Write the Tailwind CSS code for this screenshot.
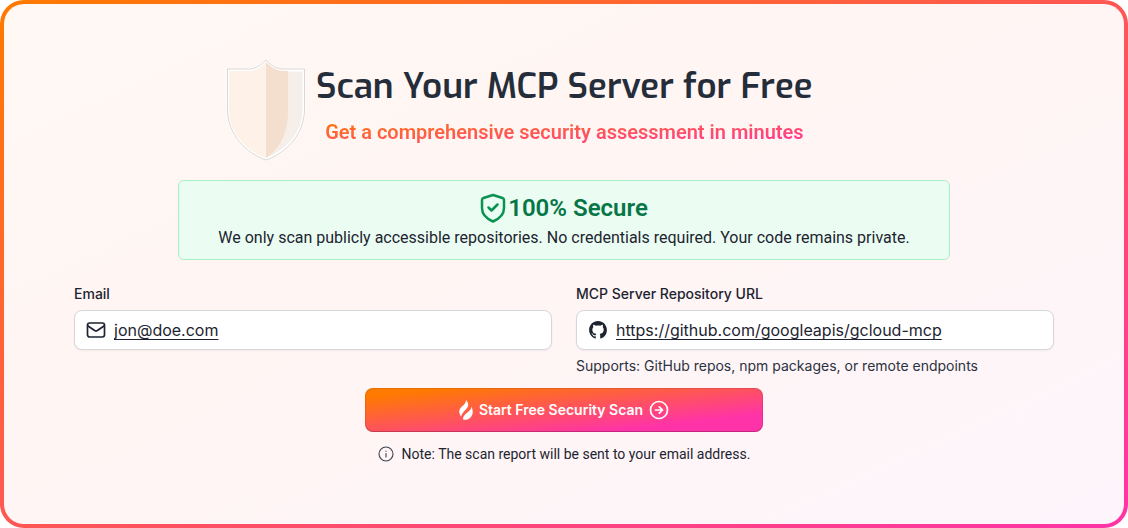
<!DOCTYPE html>
<html lang="en">
<head>
<meta charset="utf-8">
<meta name="viewport" content="width=device-width, initial-scale=1">
<title>Scan Your MCP Server for Free</title>
<script src="https://cdn.jsdelivr.net/npm/@tailwindcss/browser@4"></script>
</head>
<body class="bg-white font-['Inter',sans-serif] text-[#1d2430]">
<main class="flex min-h-screen rounded-3xl bg-linear-to-br/srgb from-[#ff7a00] to-[#ff33a8] p-1">
  <form class="flex grow flex-col items-center rounded-[20px] bg-linear-to-br/srgb from-[#fff8f3] via-[#fff5f4] to-[#fef5fc] px-[70px] pt-[54px]">
    <header class="flex items-start gap-2.5 self-start pl-[152px]">
      <svg class="h-[104px] w-20" viewBox="0 0 80 104" aria-hidden="true">
        <path d="M40 3C46 9 52 12 58 12H78V52C78 76 60 94 40 101C20 94 2 76 2 52V12H22C28 12 34 9 40 3Z" fill="#f6eee8" stroke="#fff" stroke-width="3"/>
        <path d="M40 2C46 8 51 11 58 11H78.500V52C78 77 60 95 40 102C20 95 2 77 1.500 52V11H22C29 11 34 8 40 2Z" fill="none" stroke="#c9c6c3" stroke-width=".7"/>
        <path d="M40 4C34 10 28 13 22 13H3V52C3 75 20 93 40 100Z" fill="#fef1e8"/>
        <path d="M40 4C46 10 52 13 58 13H62V52C62 72 56 90 40 100Z" fill="#f4dfcf"/>
      </svg>
      <div class="pt-1">
        <h1 class="font-['Exo','Exo_2','Roboto',sans-serif] text-[35px] leading-[48px] font-semibold whitespace-nowrap text-[#252d3a]">Scan Your MCP Server for Free</h1>
        <p class="mx-auto mt-2 w-fit bg-linear-to-br/srgb from-[#ff7a00] to-[#ff33a8] bg-clip-text font-['Roboto'] text-xl leading-7 font-semibold text-transparent">Get a comprehensive security assessment in minutes</p>
      </div>
    </header>
    <section class="mt-[18px] w-full max-w-[772px] rounded-md border border-[#a9efc5] bg-[#ebfdf3] pt-[11px] pb-2 text-center font-['Roboto']">
      <h2 class="flex items-center justify-center gap-0.5 text-2xl leading-8 font-semibold text-[#067647]">
        <svg class="h-[30px] w-[26px]" viewBox="0 0 26 30" fill="none" stroke="#099250" stroke-width="2.500" stroke-linecap="round" stroke-linejoin="round" aria-hidden="true"><path d="M13 2L22.500 5Q24 5.500 24 7V15C24 21 20 25.500 13 28.500C6 25.500 2 21 2 15V7Q2 5.500 3.500 5Z"/><path d="M8.500 14.500L11.500 17.500L17.500 11.500"/></svg>
        100% Secure
      </h2>
      <p class="mt-px text-base leading-[26px]">We only scan publicly accessible repositories. No credentials required. Your code remains private.</p>
    </section>
    <div class="mt-6 grid w-full grid-cols-2 gap-6">
      <div>
        <label for="email" class="block text-sm leading-5 font-medium">Email</label>
        <div class="mt-1.5 flex h-10 items-center gap-2 rounded-lg border border-[#d5d7da] bg-white px-[11px] shadow-xs">
          <svg class="size-5 shrink-0" viewBox="0 0 20 20" fill="none" stroke="#1d2430" stroke-width="1.700" stroke-linecap="round" stroke-linejoin="round" aria-hidden="true"><rect x="1.500" y="3" width="17" height="14" rx="2.200"/><path d="M2 6L8.700 10.500Q10 11.300 11.300 10.500L18 6"/></svg>
          <input id="email" type="email" value="jon@doe.com" class="min-w-0 grow bg-transparent text-base underline underline-offset-3 outline-none">
        </div>
      </div>
      <div>
        <label for="repo" class="block text-sm leading-5 font-medium">MCP Server Repository URL</label>
        <div class="mt-1.5 flex h-10 items-center gap-2 rounded-lg border border-[#d5d7da] bg-white px-[11px] shadow-xs">
          <svg class="size-5 shrink-0" viewBox="-1 -1 18 18" fill="#1d2430" aria-hidden="true"><path d="M8 0C3.580 0 0 3.580 0 8c0 3.540 2.290 6.530 5.470 7.590.4.070.55-.17.55-.38 0-.19-.01-.82-.01-1.490-2.010.37-2.530-.49-2.690-.94-.09-.23-.48-.94-.82-1.130-.28-.15-.68-.52-.01-.53.63-.01 1.080.58 1.230.82.72 1.210 1.870.87 2.330.66.07-.52.28-.87.51-1.070-1.780-.2-3.640-.89-3.640-3.950 0-.87.31-1.590.82-2.150-.08-.2-.36-1.020.08-2.120 0 0 .67-.21 2.200.82.64-.18 1.320-.27 2-.27s1.360.09 2 .27c1.530-1.040 2.200-.82 2.200-.82.44 1.100.16 1.920.08 2.120.51.56.82 1.270.82 2.150 0 3.070-1.870 3.750-3.650 3.950.29.25.54.73.54 1.480 0 1.070-.01 1.930-.01 2.200 0 .21.15.46.55.38A8.010 8.010 0 0 0 16 8c0-4.420-3.580-8-8-8Z"/></svg>
          <input id="repo" type="url" aria-describedby="repo-hint" value="https://github.com/googleapis/gcloud-mcp" class="min-w-0 grow bg-transparent text-base underline underline-offset-3 outline-none">
        </div>
        <p id="repo-hint" class="mt-1.5 text-sm leading-5 text-[#2b3240]">Supports: GitHub repos, npm packages, or remote endpoints</p>
      </div>
    </div>
    <button type="submit" class="mt-3 flex h-11 w-full max-w-[398px] items-center justify-center gap-1.5 rounded-lg bg-linear-to-br/srgb from-[#ff7a00] from-10% to-[#ff33a8] to-80% text-sm font-semibold text-white inset-ring inset-ring-black/10 inset-shadow-[0_-1px_0_rgb(0_0_0/0.15)]">
      <svg class="h-5 w-3.5" viewBox="0 0 14 20" fill="#fff" aria-hidden="true"><path d="M7 0C9.200 2.500 10 5 8.500 7.300C7 9.700 3 12.500 2.200 16.500C-.5 13.500-.3 10 2 7.500C4.500 5 7 3.500 7 0Z"/><path d="M12.500 6.500C14.500 11 14 15 11.500 17.500C9.500 19.500 6.500 20.300 4 19.500C3.800 16.500 5.500 14.800 8 12.700C10.700 10.400 12.500 9.500 12.500 6.500Z"/></svg>
      Start Free Security Scan
      <svg class="size-5" viewBox="0 0 20 20" fill="none" stroke="#fff" stroke-width="1.700" stroke-linecap="round" stroke-linejoin="round" aria-hidden="true"><circle cx="10" cy="10" r="8.500"/><path d="M6.500 10H13.500M10.300 6.800L13.500 10L10.300 13.200"/></svg>
    </button>
    <p class="mt-3 flex items-center gap-2 font-['Roboto'] text-sm leading-5">
      <svg class="size-4" viewBox="0 0 16 16" fill="none" stroke="#3a414d" stroke-width="1.100" stroke-linecap="round" aria-hidden="true"><circle cx="8" cy="8" r="7"/><path d="M8 7.500V11M8 5V5.200"/></svg>
      Note: The scan report will be sent to your email address.
    </p>
  </form>
</main>
</body>
</html>
